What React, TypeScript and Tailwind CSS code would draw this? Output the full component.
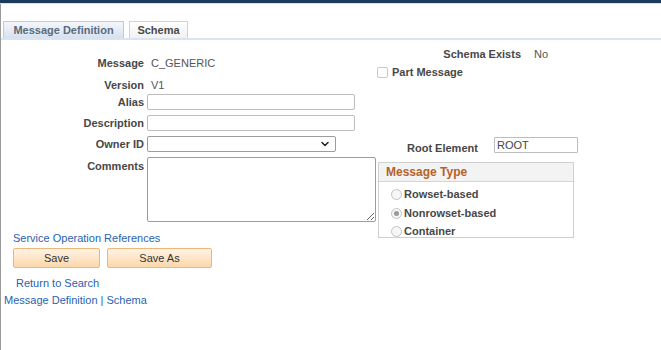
import { ChevronDown } from "lucide-react";

const label = "text-[11px] font-bold text-[#474747] leading-[14px]";
const value = "text-[11px] text-[#555] leading-[14px]";
const link = "text-[11px] text-[#2a62ad] leading-[14px]";

function Radio({ text, checked, className }: { text: string; checked?: boolean; className?: string }) {
    return (
        <div className={`flex items-center h-[14px] pl-[12px] ${className ?? ""}`}>
            <span className="w-[11px] h-[11px] rounded-full border border-[#c4c4c4] bg-[#f6f6f6] flex items-center justify-center">
                {checked && <span className="w-[5px] h-[5px] rounded-full bg-[#9a9a9a]" />}
            </span>
            <span className={`${label} ml-[2px]`}>{text}</span>
        </div>
    )
}

export default function App() {
    return (
        <div className="w-[661px] h-[350px] bg-white overflow-hidden font-['Liberation_Sans',Arial,sans-serif]">
            <div className="h-[3px] bg-[#1c3a5e]" />
            <div className="h-px bg-[#d3e0f0]" />
            <div className="h-[346px] border-l border-[#9a9a9a]">
                {/* tabs */}
                <div className="flex items-end gap-[5px] pl-[2px] pt-[17px] border-b-2 border-[#d8e4f2]">
                    <div className="w-[121px] h-[17px] border border-b-0 border-[#c6c9cd] bg-gradient-to-b from-[#f4f7fb] to-[#d6e1ee] flex items-center justify-center text-[11px] font-bold text-[#5a6a7c]">
                        Message Definition
                    </div>
                    <div className="w-[59px] h-[17px] border border-b-0 border-[#cfd2d6] bg-gradient-to-b from-[#ffffff] to-[#f1f1f1] flex items-center justify-center text-[11px] font-bold text-[#4a4a4a]">
                        Schema
                    </div>
                </div>

                <div className="flex">
                    {/* left column */}
                    <div className="w-[376px]">
                        <div className="flex items-center h-[16px] mt-[15px]">
                            <span className={`${label} w-[143px] text-right`}>Message</span>
                            <span className={`${value} ml-[7px]`}>C_GENERIC</span>
                        </div>
                        <div className="flex items-center h-[16px] mt-[6px]">
                            <span className={`${label} w-[143px] text-right`}>Version</span>
                            <span className={`${value} ml-[7px]`}>V1</span>
                        </div>
                        <div className="flex items-center h-[16px] mt-[1px]">
                            <span className={`${label} w-[143px] text-right`}>Alias</span>
                            <div className="ml-[3px] w-[208px] h-[16px] border border-[#bdbdbd] rounded-[2px]" />
                        </div>
                        <div className="flex items-center h-[16px] mt-[5px]">
                            <span className={`${label} w-[143px] text-right`}>Description</span>
                            <div className="ml-[3px] w-[208px] h-[16px] border border-[#bdbdbd] rounded-[2px]" />
                        </div>
                        <div className="flex items-center h-[16px] mt-[5px]">
                            <span className={`${label} w-[143px] text-right`}>Owner ID</span>
                            <div className="ml-[3px] w-[189px] h-[16px] border border-[#9c9c9c] rounded-[2px] flex items-center justify-end pr-[4px]">
                                <ChevronDown className="w-[12px] h-[12px] text-[#222]" strokeWidth={3} />
                            </div>
                        </div>
                        <div className="flex items-start mt-[5px]">
                            <span className={`${label} w-[143px] text-right pt-[2px]`}>Comments</span>
                            <textarea className="ml-[3px] w-[229px] h-[65px] border border-[#9c9c9c] rounded-[2px] resize-y outline-none" />
                        </div>

                        <div className={`${link} mt-[9px] pl-[12px]`}>Service Operation References</div>
                        <div className="flex gap-[7px] mt-[3px] pl-[12px]">
                            <button className="w-[87px] h-[20px] border border-[#efb678] rounded-[2px] bg-gradient-to-b from-[#fff3e4] to-[#fbd8ab] text-[11px] text-[#333]">Save</button>
                            <button className="w-[105px] h-[20px] border border-[#efb678] rounded-[2px] bg-gradient-to-b from-[#fff3e4] to-[#fbd8ab] text-[11px] text-[#333]">Save As</button>
                        </div>
                        <div className={`${link} mt-[8px] pl-[15px]`}>Return to Search</div>
                        <div className={`${link} mt-[3px] pl-[3px]`}>Message Definition | Schema</div>
                    </div>

                    {/* right column */}
                    <div className="flex-1">
                        <div className="flex items-center h-[14px] mt-[7px]">
                            <span className={`${label} w-[144px] text-right`}>Schema Exists</span>
                            <span className={`${value} ml-[13px]`}>No</span>
                        </div>
                        <div className="flex items-center h-[14px] mt-[4px]">
                            <span className="w-[11px] h-[11px] border border-[#c8c8c8] rounded-[2px] bg-white" />
                            <span className={`${label} ml-[4px]`}>Part Message</span>
                        </div>
                        <div className="flex items-end h-[16px] mt-[58px]">
                            <span className={`${label} w-[117px] pl-[30px] translate-y-[2px]`}>Root Element</span>
                            <div className="w-[84px] h-[16px] border border-[#bdbdbd] rounded-[1px] text-[11px] text-[#444] leading-[14px] pl-[2px]">ROOT</div>
                        </div>
                        <div className="ml-px mt-[9px] w-[196px] h-[76px] border border-[#cfcfcf]">
                            <div className="h-[19px] bg-[#f3f3f3] border-b border-[#d4d4d4] flex items-center pl-[7px] text-[12px] font-bold text-[#b4622a]">
                                Message Type
                            </div>
                            <Radio text="Rowset-based" className="mt-[5px]" />
                            <Radio text="Nonrowset-based" checked className="mt-[5px]" />
                            <Radio text="Container" className="mt-[4px]" />
                        </div>
                    </div>
                </div>
            </div>
        </div>
    )
}
